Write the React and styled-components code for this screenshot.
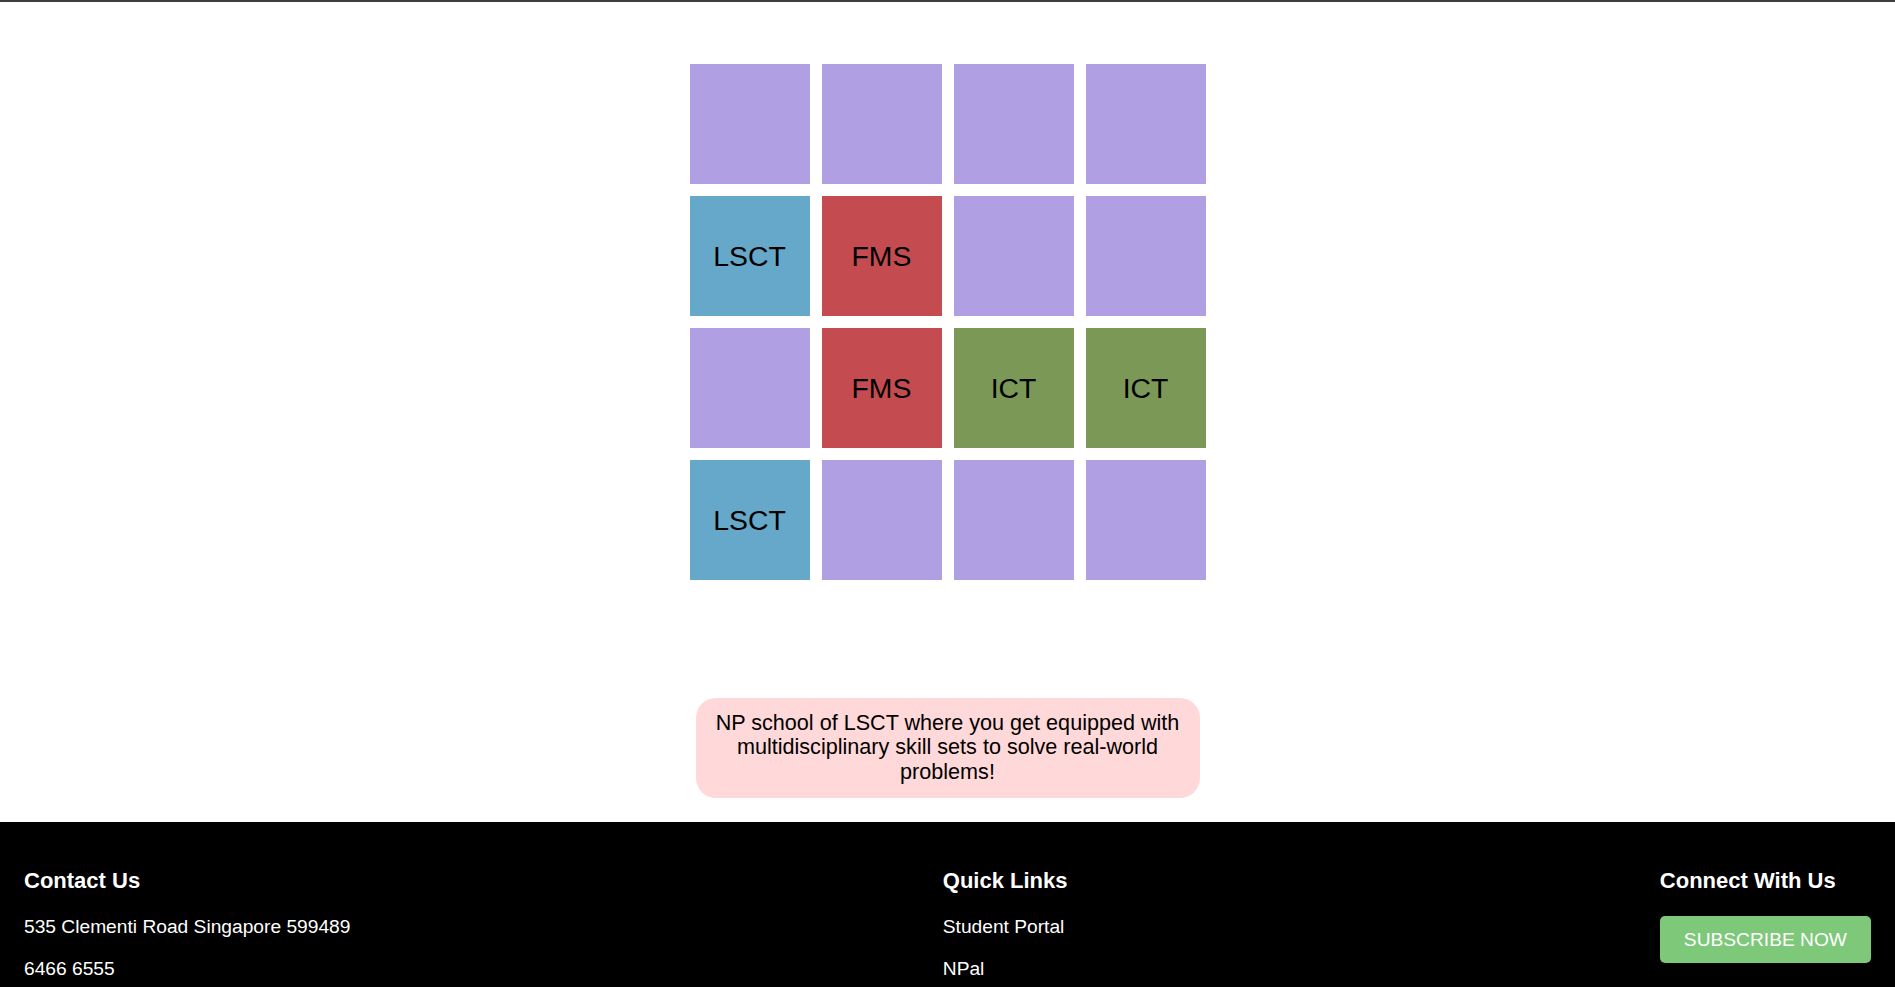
import React from 'react'
import styled, { createGlobalStyle } from 'styled-components'

const GlobalStyle = createGlobalStyle`
    html, body {
        margin: 0;
        padding: 0;
        background: #fff;
        font-family: "Liberation Sans", Arial, sans-serif;
    }
`

const TopBar = styled.div`
    height: 2px;
    background-color: #3d3d3d;
`

const Main = styled.main`
    padding-top: 62px;

    display: flex;
    flex-direction: column;
    align-items: center;
`

const Grid = styled.div`
    display: grid;
    grid-template-columns: repeat(4, 120px);
    grid-auto-rows: 120px;
    gap: 12px;
`

const cellColors = {
    empty: '#b0a0e3',
    lsct: '#66a8c9',
    fms: '#c44c51',
    ict: '#7b9857',
}

const Cell = styled.div`
    background-color: ${props => cellColors[props.kind]};
    color: #000;
    font-size: 28.4px;

    display: flex;
    align-items: center;
    justify-content: center;
`

const Blurb = styled.p`
    width: 504px;
    box-sizing: border-box;
    margin: 118px 0 0;
    padding: 12.5px 18px 13.5px;

    background-color: #ffd9d9;
    border-radius: 20px;

    font-size: 21.6px;
    line-height: 24.8px;
    text-align: center;
    color: #000;
`

const Footer = styled.footer`
    margin-top: 24px;
    padding: 24px;
    background-color: #000;
    color: #fff;

    display: flex;
    justify-content: space-between;
    align-items: flex-start;
`

// block, so the heading and paragraph margins collapse
const FooterColumn = styled.div`
    display: block;
`

const FooterTitle = styled.h3`
    margin: 22px 0;
    font-size: 22px;
    font-weight: 700;
`

const FooterText = styled.p`
    margin: 19.2px 0;
    font-size: 19.2px;
`

const SubscribeButton = styled.button`
    margin: 0;
    padding: 12.5px 24px;
    border: none;
    border-radius: 5px;
    background-color: #7ec87a;
    color: #fff;

    font-family: inherit;
    font-size: 19.2px;
    line-height: normal;
    cursor: pointer;
`

const layout = [
    ['empty', 'empty', 'empty', 'empty'],
    ['lsct', 'fms', 'empty', 'empty'],
    ['empty', 'fms', 'ict', 'ict'],
    ['lsct', 'empty', 'empty', 'empty'],
]

const labels = { lsct: 'LSCT', fms: 'FMS', ict: 'ICT', empty: '' }

export default function App() {
    return (
        <>
            <GlobalStyle />
            <TopBar />
            <Main>
                <Grid>
                    {layout.flat().map((kind, i) => (
                        <Cell key={i} kind={kind}>{labels[kind]}</Cell>
                    ))}
                </Grid>
                <Blurb>
                    NP school of LSCT where you get equipped with multidisciplinary skill sets to solve real-world problems!
                </Blurb>
            </Main>
            <Footer>
                <FooterColumn>
                    <FooterTitle>Contact Us</FooterTitle>
                    <FooterText>535 Clementi Road Singapore 599489</FooterText>
                    <FooterText>6466 6555</FooterText>
                </FooterColumn>
                <FooterColumn>
                    <FooterTitle>Quick Links</FooterTitle>
                    <FooterText>Student Portal</FooterText>
                    <FooterText>NPal</FooterText>
                </FooterColumn>
                <FooterColumn>
                    <FooterTitle>Connect With Us</FooterTitle>
                    <SubscribeButton>SUBSCRIBE NOW</SubscribeButton>
                </FooterColumn>
            </Footer>
        </>
    )
}
